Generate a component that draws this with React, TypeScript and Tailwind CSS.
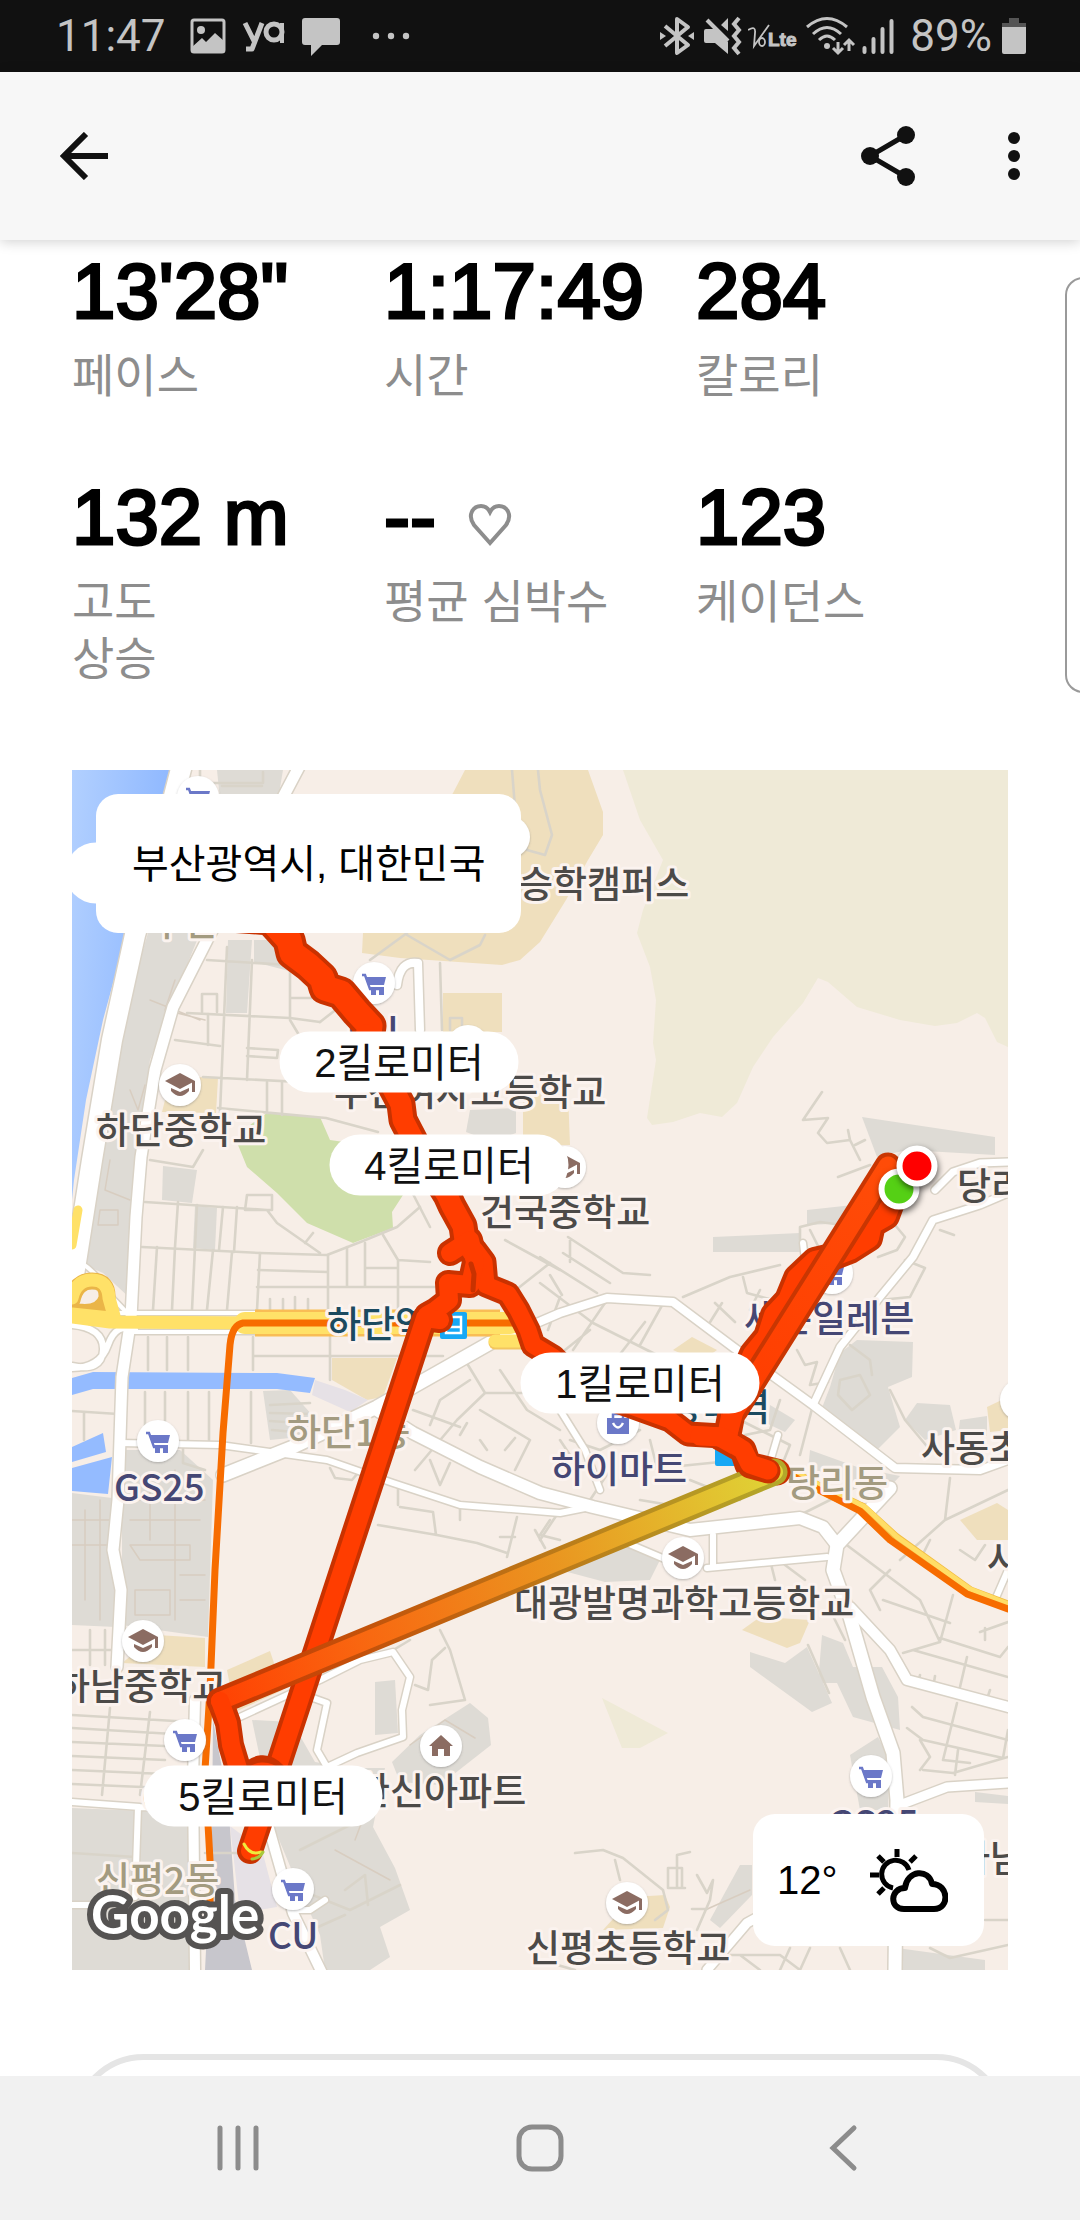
import type { ReactNode } from "react";

const stats = [
  { value: "13'28\"", label: "페이스" },
  { value: "1:17:49", label: "시간" },
  { value: "284", label: "칼로리" },
  { value: "132 m", label: "고도\n상승" },
  { value: "--", label: "평균 심박수", heart: true },
  { value: "123", label: "케이던스" },
];

// Map coordinates share one space: origin (72, 770), size 936 x 1200.
const MAP = { x: 72, y: 770, width: 936, height: 1200 };

const place = (x: number, y: number) => ({
  left: `${((x - MAP.x) / MAP.width) * 100}%`,
  top: `${((y - MAP.y) / MAP.height) * 100}%`,
});

const kilometers = [
  { text: "3킬로미터", x: 185, y: 873 },
  { text: "2킬로미터", x: 399, y: 1062 },
  { text: "4킬로미터", x: 449, y: 1165 },
  { text: "1킬로미터", x: 640, y: 1383 },
  { text: "5킬로미터", x: 263, y: 1796 },
];

const mapLabels = [
  { text: "부산", x: 150, y: 936, fill: "#a39b80" },
  { text: "승학캠퍼스", x: 519, y: 898, fill: "#4c4a48" },
  { text: "CU", x: 348, y: 1043, fill: "#454774" },
  { text: "하단중학교", x: 96, y: 1144, fill: "#4c4a48" },
  { text: "부산여자고등학교", x: 334, y: 1106, fill: "#4c4a48" },
  { text: "건국중학교", x: 480, y: 1226, fill: "#4c4a48" },
  { text: "하단역", x: 327, y: 1338, fill: "#1b4a60" },
  { text: "하단1동", x: 287, y: 1446, fill: "#a39b80" },
  { text: "GS25", x: 114, y: 1501, fill: "#454774" },
  { text: "하이마트", x: 551, y: 1483, fill: "#454774" },
  { text: "세븐일레븐", x: 744, y: 1332, fill: "#454774" },
  { text: "당리동", x: 786, y: 1497, fill: "#a39b80" },
  { text: "당리역", x: 668, y: 1421, fill: "#1b4a60" },
  { text: "당리", x: 957, y: 1200, fill: "#4c4a48" },
  { text: "사동초", x: 921, y: 1462, fill: "#4c4a48" },
  { text: "사", x: 987, y: 1573, fill: "#4c4a48" },
  { text: "대광발명과학고등학교", x: 514, y: 1617, fill: "#4c4a48" },
  { text: "하남중학교", x: 56, y: 1700, fill: "#4c4a48" },
  { text: "한신아파트", x: 356, y: 1805, fill: "#4c4a48" },
  { text: "GS25", x: 142, y: 1811, fill: "#454774" },
  { text: "신평2동", x: 96, y: 1894, fill: "#a39b80" },
  { text: "CU", x: 268, y: 1949, fill: "#454774" },
  { text: "신평초등학교", x: 526, y: 1962, fill: "#4c4a48" },
  { text: "GS25", x: 828, y: 1837, fill: "#454774" },
  { text: "하남", x: 956, y: 1872, fill: "#4c4a48" },
];

const pois = [
  { kind: "cart", x: 198, y: 797 },
  { kind: "blank", x: 509, y: 837 },
  { kind: "cart", x: 374, y: 983 },
  { kind: "blank", x: 468, y: 1046 },
  { kind: "school", x: 180, y: 1085 },
  { kind: "school", x: 565, y: 1167 },
  { kind: "cart", x: 832, y: 1273 },
  { kind: "blank", x: 1021, y: 1400 },
  { kind: "bag", x: 618, y: 1423 },
  { kind: "cart", x: 158, y: 1441 },
  { kind: "school", x: 683, y: 1558 },
  { kind: "school", x: 143, y: 1641 },
  { kind: "cart", x: 185, y: 1740 },
  { kind: "home", x: 441, y: 1746 },
  { kind: "cart", x: 871, y: 1776 },
  { kind: "cart", x: 293, y: 1889 },
  { kind: "school", x: 627, y: 1903 },
];

const builtUp = [
  "217,770 283,770 278,800 220,800",
  "148,933 200,933 170,1007 150,1060 136,1157 132,1300 103,1273 80,1263 93,1185 110,1060",
  "228,940 252,940 247,1013 226,1013",
  "254,940 275,940 293,972 254,962",
  "163,1166 197,1170 192,1203 162,1200",
  "195,1206 217,1208 215,1250 193,1248",
  "470,1110 516,1108 516,1133 492,1142 466,1132",
  "263,1391 290,1390 312,1415 320,1435 270,1440",
  "122,1450 180,1450 213,1480 208,1637 122,1625",
  "72,1493 112,1498 113,1550 118,1590 116,1627 72,1625",
  "862,1117 995,1137 995,1155 907,1150 877,1157",
  "807,1210 853,1205 850,1223 807,1225",
  "713,1237 800,1233 800,1252 713,1252",
  "857,1340 913,1342 912,1377 888,1387 900,1427 877,1450 820,1413 830,1387 840,1353",
  "917,1403 950,1405 956,1430 925,1440 905,1420",
  "960,1420 987,1416 987,1436 958,1436",
  "770,1405 795,1420 785,1432 768,1424",
  "810,1450 860,1468 900,1476 885,1492 808,1470",
  "560,1570 628,1545 660,1560 650,1580 605,1582",
  "750,1652 785,1663 807,1647 832,1703 812,1712 750,1667",
  "822,1635 843,1643 853,1667 882,1667 898,1697 900,1730 853,1717 837,1683 818,1683",
  "850,1755 878,1737 890,1760 888,1810 860,1810",
  "975,1792 1008,1796 1008,1804 975,1802",
  "375,1682 395,1680 398,1733 375,1735",
  "392,1762 420,1735 470,1703 488,1718 491,1745 440,1785 400,1782",
  "252,1720 292,1722 315,1762 352,1768 385,1768 373,1827 395,1868 410,1910 380,1927 390,1957 370,1970 325,1970 320,1935 300,1890 275,1830",
  "72,1808 190,1813 190,1970 72,1970",
  "710,1920 740,1865 752,1865 752,1895 720,1928",
  "897,1948 985,1960 985,1970 897,1970",
];

const campuses = [
  "465,770 588,770 603,812 603,835 588,860 566,900 540,942 520,960 502,965 400,958 362,953 363,933 453,793",
  "443,993 502,993 502,1032 443,1032",
  "198,1077 218,1078 216,1113 162,1112 165,1100",
  "523,1093 568,1093 570,1145 523,1145",
  "332,1358 397,1358 383,1397 367,1400 332,1380",
  "673,1350 692,1337 717,1350 700,1362",
  "960,1520 997,1503 1008,1510 1008,1540 977,1540",
  "987,1407 1008,1397 1008,1430 990,1432",
  "157,1635 205,1638 205,1667 122,1663",
  "227,1670 270,1651 283,1690 235,1712",
  "742,1630 760,1617 810,1620 800,1643 787,1648",
  "603,1930 633,1897 665,1895 670,1907 663,1928",
];

const lanes = [
  "M207 960 290 965 M187 1013 290 1018 320 1022 M227 947 220 1113 M252 960 247 1080 M203 1077 300 1082 M175 1040 220 1046",
  "M290 965V1018 M290 998H324 M290 1020 302 1040 M320 1022 338 1008 M267 1082V1113 M282 1082V1115 M218 1108 326 1118 378 1132 M247 1048 278 1050 277 1058 247 1056 M202 1012V994H217V1012 M208 1014V1045",
  "M440 963 442 1030 M370 960 407 933 M407 935 450 960 480 945 485 935 M512 770 516 820 527 850 545 855 552 835 540 790 538 770 M450 1030V1018H462V1030",
  "M200 770V783H263V772 M222 786H262",
  "M150 1160 193 1167 203 1150 M145 1202 267 1210 277 1223 320 1253 M142 1247 260 1253 327 1255 363 1241 397 1227 420 1207 M247 1195H272V1210H245Z M313 1233 305 1243",
  "M178 1202 175 1247 172 1310 M197 1205 192 1310 M223 1207 219 1250 M237 1207 234 1252 M213 1250 207 1310 M232 1252 227 1310 M260 1253 257 1310 M157 1247 153 1310",
  "M328 1255V1310 M258 1270 328 1272 M257 1287H437 M347 1247V1287 M365 1243V1287 M365 1268H397 M398 1260V1310 M383 1235 398 1260 430 1262 M270 1299V1310 M283 1299V1310 M295 1297V1310 M308 1299V1310",
  "M148 1337V1370 M167 1337V1370 M188 1337V1370 M253 1337V1370 M253 1356H443 M330 1337V1380 M145 1392V1443 M165 1392V1443 M188 1392V1443 M209 1392V1443 M251 1392V1443 M72 1411 118 1414 M84 1413V1440 M183 1445V1463L205 1470",
  "M270 1405 310 1403 M270 1413 314 1414 M270 1421 316 1424 M272 1430 318 1434",
  "M468 1365 485 1393H560 M500 1370 527 1410 560 1430 M485 1393 457 1420 415 1470 M413 1410 460 1427 M413 1194 430 1227 M505 1240 547 1263 560 1270 M507 1297 550 1263 M550 1275 562 1295 M430 1425 440 1400 470 1380 M460 1435 467 1423 M430 1460 440 1485 450 1463 M480 1410 530 1440 515 1470 M480 1440 487 1450 M505 1450 515 1438",
  "M378 1525 437 1535 477 1543 507 1553 M400 1507 433 1512 436 1535 M517 1517 507 1557 M330 1468 335 1478 352 1480 358 1473 M398 1487V1505 M460 1507V1520 M535 1530 545 1548 M500 1537H515 M550 1520 540 1535 560 1540",
  "M540 1257 597 1293 M563 1253 610 1283 M568 1237 623 1273 650 1275 M607 1300 573 1350 M683 1297 730 1277 780 1265 M743 1277 747 1293 773 1300 M722 1303 707 1327 M540 1283 593 1323 673 1363 M565 1350 590 1330 M570 1262V1240 M645 1322 600 1380 M715 1303 735 1322 M760 1290 750 1310 765 1320 M640 1345 665 1300 M560 1297 548 1330",
  "M822 1092 803 1120 828 1118 818 1133 827 1143 850 1140 860 1160 M850 1140 848 1130 M855 1145 865 1140 M838 1177 870 1165 M940 1230 954 1235 M800 1240V1227L820 1222 850 1226 M895 1225 905 1237 897 1250 878 1257 M810 1230 820 1250 M905 1260 925 1268 910 1297 880 1300",
  "M797 1350 805 1365 817 1362 810 1385 828 1382 M850 1345 870 1360 872 1375 M840 1380 860 1375 870 1395 852 1410 838 1395Z M890 1390 905 1420 930 1450 M813 1405 800 1455 M745 1435 770 1430 780 1400 M740 1420 790 1445 780 1470",
  "M540 1540 560 1510 M560 1440 580 1470 M640 1430 600 1450 570 1440 M640 1470 720 1462 M650 1440 660 1480 M590 1500 610 1470 M690 1480 740 1500 M640 1500 700 1510 M950 1478 945 1520 900 1560 M945 1520 1008 1490 M870 1480 800 1515",
  "M883 1600 950 1623 M840 1540 920 1600 940 1642 M953 1595 940 1642 903 1653 M940 1638 1000 1657 1008 1647 M913 1650 1008 1677 M967 1657 960 1687 M912 1707 923 1717 1008 1740 M957 1703 943 1760 970 1763 M907 1728 923 1740 1003 1758 1008 1730 M923 1770 953 1773 1008 1757 M920 1740 930 1757 920 1770 M955 1775 958 1750 M920 1675 918 1685 M935 1676 933 1688 M990 1690 986 1702 M830 1610 845 1640 M808 1645 829 1693 M770 1560 775 1580 M785 1565 805 1580 M880 1610 870 1590 890 1570 M930 1540 920 1560",
  "M980 1632 1008 1622 M985 1640V1628 M960 1550 975 1560 985 1545",
  "M575 1853 603 1850 623 1858 663 1890 668 1910 655 1920 M677 1867V1888H682V1868H668V1888H685 M677 1867V1855L690 1852 M697 1875 707 1893 713 1880 710 1900 697 1930 M692 1909H707",
  "M440 1630 450 1650 465 1700 M445 1648 432 1660 428 1690 415 1685 M410 1640 385 1655 M330 1650 372 1650 M430 1705 465 1700",
  "M72 1715 192 1722 M72 1728 190 1735 M72 1742 165 1746 M72 1756 165 1760 M72 1770 165 1774 M72 1784 165 1788 M110 1708 102 1795 M150 1712 140 1795 M72 1650H120 M90 1630V1665 M105 1630V1665",
  "M300 1850 350 1825 M300 1890 350 1910 400 1885 M345 1890 365 1875 368 1905 M300 1935 345 1915 M72 1853 135 1857 M205 1853H240",
  "M540 1960 575 1970 M730 1955H780L800 1970 M760 1970 740 1955 M790 1948 780 1970 M810 1948 800 1970 M840 1948 850 1970 M930 1948 950 1958 1008 1945 M985 1920 1008 1920 M620 1880 615 1860",
];

const laneDetail =
  "M175 980 165 1010 205 1020 M150 1000 200 1020 M110 1160 105 1190 130 1200 M100 1210H118V1225H98Z M145 1085 138 1110 130 1090 M72 1520H112 M72 1545H112 M85 1510V1600 M100 1500V1620 M130 1520H200 M130 1545H190V1560H140Z M135 1500H205 M150 1480V1540 M175 1470V1620 M135 1590H170V1615H135Z M180 1575H205 M180 1600H205 M410 1745 445 1720 475 1738 M330 1790 370 1800 355 1840 M335 1850 390 1880 M705 1910 750 1890";

const streets = [
  { d: "M182 765 160 850 135 935 112 1040 92 1160 74 1275", w: 20 },
  { d: "M300 765 250 860 207 940 173 1007 155 1070 141 1157 136 1217 131 1318 122 1377 118 1500 113 1550 121 1590 117 1667", w: 11 },
  { d: "M418 963 420 1030 M418 963Q400 960 397 985", w: 8 },
  { d: "M80 1262Q100 1275 105 1290L132 1318", w: 4 },
  { d: "M72 1325Q104 1328 103 1350T72 1366 M72 1368Q100 1368 108 1345T135 1330", w: 6 },
  { d: "M110 1313H260 M130 1332H260", w: 4 },
  { d: "M490 1343 560 1313 607 1298 673 1302 733 1347 813 1405 895 1468 980 1470 1008 1460", w: 8 },
  { d: "M223 1475 293 1447 377 1407 490 1343", w: 13 },
  { d: "M377 1410 413 1433 480 1467 540 1493 593 1507 690 1530 800 1518 823 1527 837 1545", w: 12 },
  { d: "M120 1443 220 1445 327 1460 393 1483 460 1505 560 1513 590 1507", w: 6 },
  { d: "M560 1410 585 1450 600 1490", w: 6 },
  { d: "M1008 1162 980 1163 953 1172 935 1190", w: 7 },
  { d: "M1008 1193 980 1205 933 1220 913 1257 880 1297 840 1347 813 1405", w: 7 },
  { d: "M778 1435 770 1462 M803 1243 805 1260", w: 6 },
  { d: "M627 1543 667 1560 M707 1568 827 1557 M713 1535V1565", w: 6 },
  { d: "M890 1488 837 1545 833 1570 850 1617 873 1697 893 1753 897 1800 895 1970", w: 13 },
  { d: "M850 1607 890 1650 907 1680 1008 1707", w: 10 },
  { d: "M897 1806 947 1787 1008 1783", w: 9 },
  { d: "M1008 1570 995 1600", w: 6 },
  { d: "M240 1717 320 1680 360 1660 393 1652 410 1677 402 1710 403 1737 357 1753 327 1767 317 1750 327 1703 313 1698", w: 6 },
  { d: "M72 1802 140 1807 190 1809 M138 1807 135 1897 M72 1905 110 1905 M293 1910 310 1910 325 1900", w: 6 },
  { d: "M195 1700 193 1780 195 1970 M268 1825 293 1913 323 1975", w: 10 },
  { d: "M707 1970 747 1923 780 1905", w: 9 },
];

// Wobbly stretches of the run; each gets a dark casing and a bright core.
const runPaths = [
  { d: "M180 912 230 916 270 919 289 940 292 953 308 965 322 978 325 988 341 993 357 1012 370 1026 368 1040", w: 33 },
  { d: "M366 1035 380 1070 391 1085 401 1104 403 1120 416 1145 447 1195 452 1206 463 1226 465 1240 475 1255", w: 29 },
  { d: "M475 1250 484 1262 486 1285 508 1294 518 1310 528 1330 533 1345 553 1357 580 1385 620 1402 645 1411 670 1420 688 1434 722 1436", w: 25 },
  { d: "M450 1253 470 1240 475 1262 470 1285 448 1283 449 1300 436 1310 427 1315", w: 26 },
  { d: "M440 1320 425 1318 280 1760 262 1815 250 1851", w: 26 },
  { d: "M893 1197 886 1216 872 1224 869 1238 850 1250 832 1257 815 1261 797 1278 788 1300 774 1315 767 1337 753 1354 735 1395 727 1437", w: 28 },
  { d: "M720 1437 743 1450 748 1465 777 1472", w: 27 },
];

function PoiGlyph({ kind }: { kind: string }) {
  if (kind === "cart") {
    return (
      <g>
        <path d="M-12-8H-9L-4 6H10" fill="none" stroke="#6b78c8" strokeWidth="2.4" />
        <path d="M-9-6H12L10 2H-6Z M-4 4H10V7H-3Z" fill="#6b78c8" />
        <path d="M-3 6H2V12H-3Z M5 6H10V12H5Z" fill="#6b78c8" />
      </g>
    );
  }
  if (kind === "school") {
    return (
      <g fill="#8b6c62">
        <path d="M-15-4 0-12 15-4 0 4Z" />
        <path d="M-9 3 0 7 9 3V6Q0 16-9 6Z" />
        <path d="M12-4H15V7H12Z" />
      </g>
    );
  }
  if (kind === "home") {
    return <path d="M0-11 12 0H9V10H3V3H-3V10H-9V0H-12Z" fill="#8b6c62" />;
  }
  if (kind === "bag") {
    return (
      <g>
        <path d="M-11-5H11V11H-11Z" fill="#6b78c8" />
        <path d="M-5-5V-9H5V-5" fill="none" stroke="#6b78c8" strokeWidth="2.5" />
        <path d="M-5 0Q0 9 5 0" fill="none" stroke="#fff" strokeWidth="2.5" />
      </g>
    );
  }
  return null;
}

function MapCanvas() {
  return (
    <svg viewBox="72 770 936 1200" className="block w-full" role="img" aria-label="러닝 경로 지도">
      <defs>
        <linearGradient id="water" x1="0" y1="0" x2="1" y2="0.3">
          <stop offset="0" stopColor="#b2d0ff" />
          <stop offset="1" stopColor="#8cb6ff" />
        </linearGradient>
        <linearGradient id="pace" gradientUnits="userSpaceOnUse" x1="220" y1="1700" x2="775" y2="1472">
          <stop offset="0" stopColor="#ff4203" />
          <stop offset="0.25" stopColor="#f96610" />
          <stop offset="0.6" stopColor="#ea9520" />
          <stop offset="1" stopColor="#dfd436" />
        </linearGradient>
        <linearGradient id="paceEdge" gradientUnits="userSpaceOnUse" x1="220" y1="1700" x2="775" y2="1472">
          <stop offset="0" stopColor="#c93602" />
          <stop offset="0.4" stopColor="#c0610f" />
          <stop offset="1" stopColor="#b3a82a" />
        </linearGradient>
        <linearGradient id="sprint" gradientUnits="userSpaceOnUse" x1="888" y1="1165" x2="735" y2="1410">
          <stop offset="0" stopColor="#ff4c08" />
          <stop offset="1" stopColor="#ff3d00" />
        </linearGradient>
        <filter id="poiShadow" x="-30%" y="-30%" width="160%" height="160%">
          <feDropShadow dx="0" dy="1" stdDeviation="1.2" floodColor="#777" floodOpacity="0.5" />
        </filter>
      </defs>

      <rect x="72" y="770" width="936" height="1200" fill="#f7eee7" />
      <path
        d="M623 770 640 820 663 860 643 910 637 933 650 967 656 1000 653 1043 656 1060 647 1118 652 1125 673 1122 700 1113 722 1117 737 1103 753 1067 773 1037 803 1003 818 978 828 982 857 1007 900 1020 935 1026 957 1023 977 1013 985 1018 997 1042 1008 1047V770Z M602 1698 668 1733 640 1748 622 1748Z"
        fill="#efead7"
      />
      <path
        d="M267 1113 320 1117 330 1140 400 1150 403 1195 392 1212 393 1228 353 1243 307 1223 277 1193 247 1167 238 1145 243 1130Z"
        fill="#cfdfab"
      />
      {campuses.map((points) => (
        <polygon key={points} points={points} fill="#efdfbd" />
      ))}
      {builtUp.map((points) => (
        <polygon key={points} points={points} fill="#dedbd5" />
      ))}
      <path d="M315 1380 345 1390 368 1400 350 1412 312 1395Z M230 1826 262 1850 277 1907 240 1913Z" fill="#e6e1e6" />
      <path d="M213 1720 228 1800 235 1900 252 1970H205L212 1830Z" fill="#c7c6cc" />
      <path d="M72 770H172L155 815 127 932 103 1020 86 1100 74 1180 72 1200Z" fill="url(#water)" />
      <path
        d="M72 1378 93 1372 277 1373 315 1378 310 1393 277 1389 93 1389 72 1395Z M72 1447 103 1433 106 1452 72 1462Z M72 1468 112 1457 108 1494 72 1491Z"
        fill="#94bbff"
      />

      <g fill="none" strokeLinejoin="round" strokeLinecap="round">
        <path d={laneDetail} stroke="#d8cdc0" strokeWidth="1.5" />
        {lanes.map((d) => (
          <path key={d} d={d} stroke="#d9d4c9" strokeWidth="2.6" />
        ))}
        {streets.map(({ d, w }) => (
          <path key={d} d={d} stroke="#d9d2c6" strokeWidth={w + 3} />
        ))}
        {streets.map(({ d, w }) => (
          <path key={d} d={d} stroke="#fff" strokeWidth={w} />
        ))}

        <path d="M78 1210 72 1245" stroke="#ffe168" strokeWidth="9" />
        <path d="M255 1323H500" stroke="#f9bd55" strokeWidth="27" strokeLinecap="butt" />
        <path d="M495 1343H525" stroke="#f3c65f" strokeWidth="13" />
        <path d="M72 1317 110 1322 255 1323H505 M495 1341H525" stroke="#ffe168" strokeWidth="13" />
        <path d="M245 1323H510" stroke="#ffe168" strokeWidth="22" />
        <path d="M72 1300Q76 1281 92 1281T107 1298Q103 1315 78 1312" stroke="#eab548" strokeWidth="17" />
        <path d="M72 1298Q76 1280 92 1280T109 1298L114 1316 M72 1314 110 1318" stroke="#ffe168" strokeWidth="13" />
        <path d="M787 1470 823 1490 862 1508 895 1538 970 1592 1008 1606" stroke="#f2bd44" strokeWidth="11" />
        <path d="M787 1468 825 1488 865 1507 897 1537 970 1589 1008 1604" stroke="#ffdd66" strokeWidth="5" />
        <path d="M785 1472 823 1492 860 1511 890 1540 967 1594 1008 1609" stroke="#f76c00" strokeWidth="7" />
        <path
          d="M527 1323H243Q232 1325 230 1345L223 1433 215 1570 210 1690 205 1770 210 1860V1905"
          stroke="#f76c00"
          strokeWidth="7"
        />
      </g>

      <rect x="440" y="1312" width="27" height="27" rx="2" fill="#17a8f5" />
      <path d="M446 1317H461V1333H446Z" fill="none" stroke="#fff" strokeWidth="2.5" />
      <path d="M446 1327H461" stroke="#fff" strokeWidth="2.5" />
      <rect x="715" y="1440" width="26" height="26" rx="2" fill="#17a8f5" />

      {pois.map(({ kind, x, y }) => (
        <g key={`${x}-${y}`} transform={`translate(${x} ${y})`}>
          <circle r="21" fill="#fff" filter="url(#poiShadow)" />
          <PoiGlyph kind={kind} />
        </g>
      ))}

      <g
        fontFamily='"Noto Sans CJK KR", sans-serif'
        fontSize="37"
        fontWeight="500"
        stroke="#fbf3ef"
        strokeWidth="6"
        strokeLinejoin="round"
        paintOrder="stroke"
      >
        {mapLabels.map(({ text, x, y, fill }) => (
          <text key={`${text}-${x}-${y}`} x={x} y={y} fill={fill}>
            {text}
          </text>
        ))}
      </g>

      <g fill="none" strokeLinejoin="round" strokeLinecap="round">
        {runPaths.map(({ d, w }) => (
          <path key={d} d={d} stroke="#c93200" strokeWidth={w} />
        ))}
        {runPaths.map(({ d, w }) => (
          <path key={d} d={d} stroke="#ff3d00" strokeWidth={w - 8} />
        ))}
        <path d="M471 1264 474 1274 473 1290" stroke="#c93200" strokeWidth="5" />
        <path d="M888 1166 735 1410" stroke="#c93602" strokeWidth="27" />
        <path d="M888 1166 735 1410" stroke="url(#sprint)" strokeWidth="19" />
        <path d="M738 1395 727 1435" stroke="#ff3d00" strokeWidth="20" />
        <path d="M220 1701 228 1723 231 1745 240 1775 255 1800" stroke="#c93200" strokeWidth="26" />
        <path d="M246 1775Q262 1757 276 1772" stroke="#c93200" strokeWidth="20" />
        <path d="M248 1779Q262 1765 276 1777" stroke="#ff3d00" strokeWidth="18" />
        <path d="M220 1701 774 1472" stroke="url(#paceEdge)" strokeWidth="27" />
        <path d="M220 1701 774 1472" stroke="url(#pace)" strokeWidth="18" />
        <path d="M220 1701 228 1723 231 1745 240 1775 255 1800" stroke="#ff3d00" strokeWidth="18" />
        <path d="M743 1452 750 1466 768 1471" stroke="#c93200" strokeWidth="25" />
        <path d="M700 1436 722 1437 743 1450 750 1464 768 1470" stroke="#ff3d00" strokeWidth="19" />
        <path d="M244 1844Q250 1856 261 1852" stroke="#f0ea3c" strokeWidth="3" />
        <path d="M252 1859Q260 1858 263 1852" stroke="#a8c83a" strokeWidth="3" />
      </g>

      <text
        x="91"
        y="1934"
        fontFamily="Lato, sans-serif"
        fontSize="53"
        fontWeight="700"
        fill="#fff"
        stroke="#555352"
        strokeWidth="12"
        strokeLinejoin="round"
        paintOrder="stroke"
      >
        Google
      </text>
    </svg>
  );
}

function StatusIcons() {
  return (
    <div className="flex items-center">
      <svg viewBox="0 0 34 40" className="mr-2.5 h-10 w-[34px]" fill="none" stroke="#c4c4c4" strokeWidth="4" aria-hidden="true">
        <path d="M5 10 28 29 17 37V3L28 11 5 30" strokeLinejoin="round" />
        <path d="M0 16 6 20 0 24Z M34 16 28 20 34 24Z" fill="#c4c4c4" stroke="none" />
      </svg>
      <svg viewBox="0 0 38 40" className="mr-1.5 h-10 w-[38px]" fill="#c4c4c4" aria-hidden="true">
        <path d="M2 13H10L24 26V38L11 27H2Q0 27 0 25V15Q0 13 2 13Z M24 2V15L17 9Z" />
        <path d="M3 4 24 25" stroke="#c4c4c4" strokeWidth="4" />
        <path d="M35 2 30 8 35 14 30 20 35 26 30 32 35 38" fill="none" stroke="#c4c4c4" strokeWidth="4" />
      </svg>
      <svg viewBox="0 0 50 40" className="mr-2 h-10 w-[50px]" fill="#c4c4c4" aria-label="VoLTE">
        <path d="M0 14Q8 9 7 17L6 30 21 9" fill="none" stroke="#c4c4c4" strokeWidth="1.8" />
        <ellipse cx="14" cy="26" rx="3" ry="4" fill="none" stroke="#c4c4c4" strokeWidth="1.8" />
        <text x="20" y="30" fontFamily="Liberation Sans, sans-serif" fontSize="19" fontWeight="700" stroke="#c4c4c4">
          Lte
        </text>
      </svg>
      <svg viewBox="0 0 50 40" className="mr-1.5 h-10 w-[50px]" fill="none" stroke="#c4c4c4" strokeWidth="3" aria-hidden="true">
        <path d="M1 11Q21-6 41 11 M7 18Q21 5 35 18 M13 24Q21 16 29 24" />
        <circle cx="21" cy="30" r="3" fill="#c4c4c4" stroke="none" />
        <path d="M32 26V37 M27 32 32 37 37 32 M43 35V24 M38 29 43 24 48 29" />
      </svg>
      <svg viewBox="0 0 32 40" className="mr-4 h-10 w-8" stroke="#c4c4c4" strokeWidth="4" strokeLinecap="round" aria-hidden="true">
        <path d="M2.5 32V36 M11.5 23V36 M20.5 13V36 M29.5 5V36" />
      </svg>
      <span className="mr-2.5 text-[44px] leading-none">89%</span>
      <svg viewBox="0 0 24 40" className="h-10 w-6" aria-hidden="true">
        <path d="M7 2H17V7H24V12H0V7H7Z" fill="#555" />
        <path d="M0 11H24V36Q24 38 22 38H2Q0 38 0 36Z" fill="#c4c4c4" />
      </svg>
    </div>
  );
}

function StatusBar() {
  return (
    <div className="flex h-[72px] shrink-0 items-center justify-between bg-[#111] pr-[54px] pl-14 font-[Roboto,sans-serif] text-[#c4c4c4]">
      <div className="flex items-center">
        <span className="mr-6 text-[44px] leading-none">11:47</span>
        <svg viewBox="0 0 36 40" className="mr-4 h-10 w-9" aria-hidden="true">
          <rect x="2" y="4" width="32" height="32" rx="2" fill="none" stroke="#c4c4c4" strokeWidth="3" />
          <circle cx="11" cy="14" r="4" fill="#c4c4c4" />
          <path d="M2 31 12 22 16 26 25 17 34 25V36H2Z" fill="#c4c4c4" />
        </svg>
        <svg viewBox="0 0 44 40" className="mr-4 h-10 w-11" fill="none" stroke="#c4c4c4" strokeWidth="5" aria-hidden="true">
          <path d="M3 7 12 25 M20 7 10 33H4" strokeLinejoin="round" />
          <circle cx="32" cy="16" r="8" />
          <path d="M40 7V27" strokeWidth="4" />
        </svg>
        <svg viewBox="0 0 38 40" className="mr-8 h-10 w-[38px]" fill="#c4c4c4" aria-hidden="true">
          <path d="M3 2H35Q38 2 38 5V26Q38 29 35 29H20L9 40V29H3Q0 29 0 26V5Q0 2 3 2Z" />
        </svg>
        <svg viewBox="0 0 38 8" className="h-2 w-[38px]" fill="#c4c4c4" aria-hidden="true">
          <circle cx="4" cy="4" r="3.2" />
          <circle cx="19" cy="4" r="3.2" />
          <circle cx="34" cy="4" r="3.2" />
        </svg>
      </div>
      <StatusIcons />
    </div>
  );
}

function IconButton({ label, children }: { label: string; children: ReactNode }) {
  return (
    <button type="button" aria-label={label} className="flex size-16 items-center justify-center">
      {children}
    </button>
  );
}

function AppBar() {
  return (
    <header className="relative z-10 flex h-[168px] shrink-0 items-center justify-between bg-[#f7f7f7] pr-[34px] pl-[52px] shadow-[0_2px_12px_rgba(0,0,0,0.18)]">
      <IconButton label="뒤로">
        <svg viewBox="0 0 48 48" className="size-12" fill="none" stroke="#111" strokeWidth="6">
          <path d="M48 24H5 M26 2 4 24 26 46" />
        </svg>
      </IconButton>
      <div className="flex items-center gap-[62px]">
        <IconButton label="공유">
          <svg viewBox="0 0 56 60" className="h-[60px] w-14" fill="#111">
            <path d="M46 9 10 30 46 51" fill="none" stroke="#111" strokeWidth="5" />
            <circle cx="10" cy="30" r="9" />
            <circle cx="46" cy="9" r="9" />
            <circle cx="46" cy="51" r="9" />
          </svg>
        </IconButton>
        <IconButton label="더보기">
          <svg viewBox="0 0 12 48" className="h-12 w-3" fill="#111">
            <circle cx="6" cy="6" r="6" />
            <circle cx="6" cy="24" r="6" />
            <circle cx="6" cy="42" r="6" />
          </svg>
        </IconButton>
      </div>
    </header>
  );
}

function Stat({ value, label, heart }: { value: string; label: string; heart?: boolean }) {
  return (
    <div className="flex flex-col-reverse justify-end">
      <dt className="text-[46px] leading-[57px] whitespace-pre-line text-[#8d8d8d]">{label}</dt>
      <dd className="mb-3 flex h-[90px] items-center gap-8 text-[78px] leading-[90px] whitespace-nowrap text-black [-webkit-text-stroke:3px_black]">
        {value}
        {heart && (
          <svg viewBox="0 0 44 42" className="mt-4 h-[42px] w-11" fill="none" stroke="#8d8d8d" strokeWidth="4" aria-label="심박수">
            <path d="M22 39 6 21C-1 11 5 2 13 2Q19 2 22 8Q25 2 31 2C39 2 45 11 38 21Z" />
          </svg>
        )}
      </dd>
    </div>
  );
}

function RouteMap() {
  return (
    <section className="relative overflow-hidden" aria-label="경로">
      <MapCanvas />
      {kilometers.map(({ text, x, y }) => (
        <span
          key={text}
          style={place(x, y)}
          className="absolute flex h-[61px] w-[239px] -translate-x-1/2 -translate-y-1/2 items-center justify-center rounded-full bg-white text-[40px] leading-none text-[#111]"
        >
          {text}
        </span>
      ))}
      <span
        style={place(899, 1189)}
        className="absolute size-[41px] -translate-x-1/2 -translate-y-1/2 rounded-full border-[6px] border-white bg-[#55d015] shadow-[1px_3px_6px_rgba(0,0,0,0.6)]"
      />
      <span
        style={place(917, 1166)}
        className="absolute size-[41px] -translate-x-1/2 -translate-y-1/2 rounded-full border-[6px] border-white bg-[#ff0000] shadow-[1px_3px_6px_rgba(0,0,0,0.6)]"
      />
      <p className="absolute top-6 left-6 flex h-[139px] items-center rounded-[22px] bg-white px-9 text-[40px] leading-none whitespace-nowrap text-black">
        부산광역시, 대한민국
      </p>
      <div className="absolute right-6 bottom-6 flex h-[132px] w-[231px] items-center gap-8 rounded-[22px] bg-white pl-6 text-[40px] leading-none text-black">
        12°
        <svg viewBox="0 0 78 64" className="h-16 w-[78px]" fill="none" stroke="#000" strokeWidth="5" aria-label="구름 조금">
          <path d="M27 1V9 M8 8 14 14 M46 8 40 14 M0 27H9 M8 46 14 40" />
          <path d="M39 22A14 14 0 1 0 23 40" />
          <path d="M34 61C19 61 20 40 35 40C37 22 59 20 62 36C79 36 80 61 64 61Z" strokeWidth="6" strokeLinejoin="round" />
        </svg>
      </div>
    </section>
  );
}

function NavigationBar() {
  return (
    <nav className="grid h-36 shrink-0 grid-cols-[1fr_66px_1fr] items-center bg-[#f1f1f1] px-[205px]">
      <button type="button" aria-label="최근 앱" className="justify-self-start">
        <svg viewBox="0 0 66 60" className="h-[60px] w-[66px]" stroke="#8c8c8c" strokeWidth="5" strokeLinecap="round">
          <path d="M15 10V50 M33 10V50 M51 10V50" />
        </svg>
      </button>
      <button type="button" aria-label="홈" className="justify-self-center">
        <svg viewBox="0 0 66 60" className="h-[60px] w-[66px]" fill="none" stroke="#8c8c8c" strokeWidth="5">
          <rect x="12" y="9" width="42" height="42" rx="13" />
        </svg>
      </button>
      <button type="button" aria-label="뒤로 가기" className="justify-self-end">
        <svg viewBox="0 0 66 60" className="h-[60px] w-[66px]" fill="none" stroke="#8c8c8c" strokeWidth="5" strokeLinecap="round">
          <path d="M45 10 24 30 45 50" />
        </svg>
      </button>
    </nav>
  );
}

export default function App() {
  return (
    <div className="flex h-screen flex-col overflow-hidden bg-white font-['Liberation_Sans','Noto_Sans_CJK_KR',sans-serif]">
      <StatusBar />
      <AppBar />
      <main className="relative min-h-0 flex-1 overflow-hidden px-[72px]">
        <dl className="grid grid-cols-3 gap-y-[67px] pt-1.5 pb-[82px]">
          {stats.map((stat) => (
            <Stat key={stat.label} {...stat} />
          ))}
        </dl>
        <aside className="absolute top-[37px] -right-6 h-[416px] w-[39px] rounded-l-[18px] border-2 border-[#9a9a9a]" aria-label="다음 카드" />
        <RouteMap />
        <button
          type="button"
          aria-label="자세히 보기"
          className="mt-[84px] block h-36 w-full rounded-full border-[6px] border-[#e5e5e5]"
        />
      </main>
      <NavigationBar />
    </div>
  );
}
